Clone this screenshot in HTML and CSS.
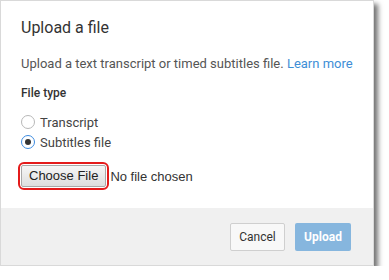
FILE: index.html
```html
<!DOCTYPE html>
<html>
<head>
<meta charset="utf-8">
<link rel="stylesheet" href="styles.css">
</head>
<body>
<div class="dialog">
  <div class="content">
    <h1 class="title">Upload a file</h1>
    <p class="desc">Upload a text transcript or timed subtitles file. <a class="link">Learn more</a></p>
    <div class="label">File type</div>
    <div class="radios">
      <div class="radio-row"><span class="radio"></span><span>Transcript</span></div>
      <div class="radio-row"><span class="radio checked"></span><span>Subtitles file</span></div>
    </div>
    <div class="file-row">
      <span class="highlight"><span class="file-btn">Choose File</span></span>
      <span class="file-name">No file chosen</span>
    </div>
  </div>
  <div class="footer">
    <span class="btn cancel">Cancel</span>
    <span class="btn upload">Upload</span>
  </div>
</div>
</body>
</html>
```
FILE: styles.css
```css
html, body {
  margin: 0;
  padding: 0;
  background: #fff;
}
body {
  font-family: Roboto, "Liberation Sans", sans-serif;
  color: #333;
}
.dialog {
  width: 372px;
  border: 1px solid #d9d9d9;
  background: #fff;
  box-shadow: 4px 4px 5px rgba(0, 0, 0, 0.55);
}
.content {
  padding: 17px 20px 18px 20px;
}
.title {
  margin: 0;
  font-size: 16px;
  line-height: 20px;
  font-weight: 400;
  color: #333;
}
.desc {
  margin: 16px 0 0 0;
  font-size: 13px;
  line-height: 20px;
  color: #555;
}
.link {
  color: #3e8ed6;
}
.label {
  margin-top: 9px;
  font-size: 12px;
  line-height: 20px;
  font-weight: 500;
  color: #333;
}
.radios {
  margin-top: 9px;
  display: flex;
  flex-direction: column;
}
.radio-row {
  display: flex;
  align-items: center;
  height: 20px;
  font-size: 13px;
  color: #444;
}
.radio {
  width: 14px;
  height: 14px;
  margin-right: 5px;
  box-sizing: border-box;
  border: 1px solid #b8b8b8;
  border-radius: 50%;
  background: #fff;
  display: flex;
  align-items: center;
  justify-content: center;
}
.radio.checked {
  border-color: #3d8be0;
}
.radio.checked::after {
  content: "";
  width: 6px;
  height: 6px;
  border-radius: 50%;
  background: #333;
}
.file-row {
  margin-top: 10px;
  display: flex;
  align-items: center;
  margin-left: -3px;
}
.highlight {
  display: inline-flex;
  border: 2px solid #e41b1b;
  border-radius: 6px;
  padding: 1px;
}
.file-btn {
  display: inline-block;
  font-family: "Liberation Sans", Arial, sans-serif;
  font-size: 13px;
  line-height: 18px;
  color: #222;
  padding: 1px 7px;
  border: 1px solid #a9a9a9;
  border-radius: 2px;
  background: linear-gradient(#f6f6f6, #dedede);
}
.file-name {
  font-family: "Liberation Sans", Arial, sans-serif;
  font-size: 13px;
  color: #333;
  margin-left: 1px;
}
.footer {
  background: #f0f0f0;
  height: 57px;
  box-sizing: border-box;
  padding: 15px 22px 0 0;
  display: flex;
  justify-content: flex-end;
  align-items: flex-start;
  gap: 10px;
}
.btn {
  height: 28px;
  box-sizing: border-box;
  display: inline-flex;
  align-items: center;
  justify-content: center;
  font-size: 12px;
  border-radius: 2px;
}
.cancel {
  width: 55px;
  background: #f8f8f8;
  border: 1px solid #cfcfcf;
  color: #333;
}
.upload {
  width: 56px;
  background: #86b6de;
  color: #fff;
  font-weight: 700;
}
```
